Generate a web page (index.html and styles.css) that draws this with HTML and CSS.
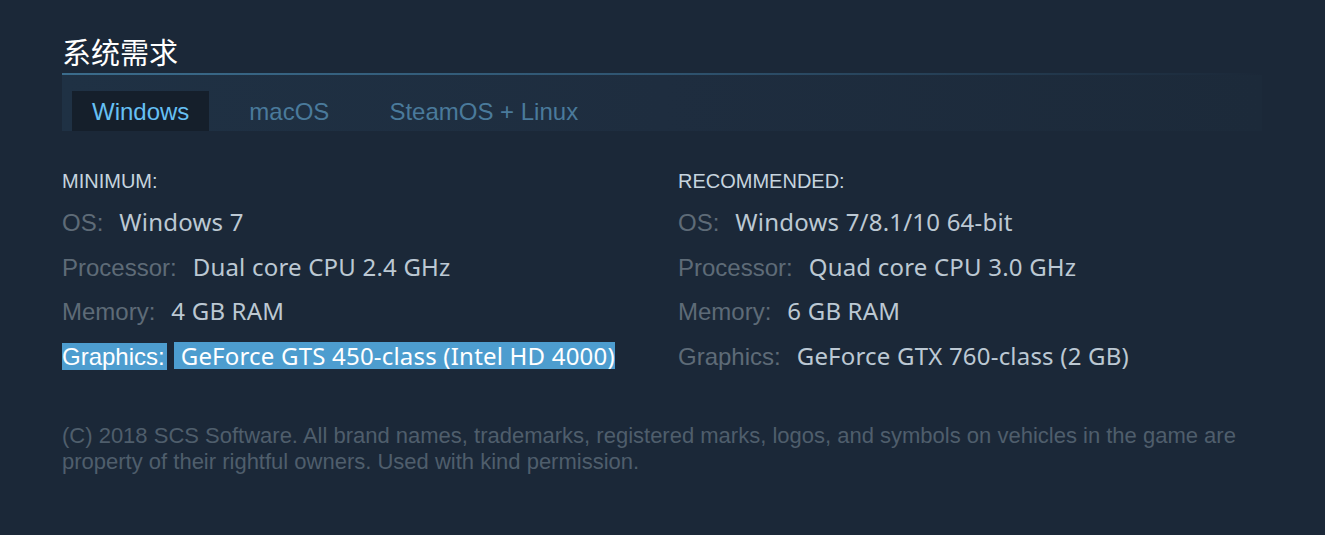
FILE: index.html
```html
<!DOCTYPE html>
<html lang="zh-CN">
<head>
    <meta charset="UTF-8">
    <meta name="viewport" content="width=device-width, initial-scale=1.0">
    <title>系统需求</title>
    <link rel="stylesheet" href="styles.css">
</head>
<body>
    <div class="sysreq">
        <h2>系统需求</h2>
        <div class="rule"></div>
        <div class="tabs">
            <div class="tab active">Windows</div>
            <div class="tab">macOS</div>
            <div class="tab">SteamOS + Linux</div>
        </div>

        <div class="columns">
            <div class="col">
                <div class="col-title">MINIMUM:</div>
                <ul>
                    <li><span class="label">OS:</span><span class="value">Windows 7</span></li>
                    <li><span class="label">Processor:</span><span class="value">Dual core CPU 2.4 GHz</span></li>
                    <li><span class="label">Memory:</span><span class="value">4 GB RAM</span></li>
                    <li><span class="label selected">Graphics:</span><span class="value selected">GeForce GTS 450-class (Intel HD 4000)</span></li>
                </ul>
            </div>
            <div class="col">
                <div class="col-title">RECOMMENDED:</div>
                <ul>
                    <li><span class="label">OS:</span><span class="value">Windows 7/8.1/10 64-bit</span></li>
                    <li><span class="label">Processor:</span><span class="value">Quad core CPU 3.0 GHz</span></li>
                    <li><span class="label">Memory:</span><span class="value">6 GB RAM</span></li>
                    <li><span class="label">Graphics:</span><span class="value">GeForce GTX 760-class (2 GB)</span></li>
                </ul>
            </div>
        </div>

        <p class="legal">(C) 2018 SCS Software. All brand names, trademarks, registered marks, logos, and symbols on vehicles in the game are property of their rightful owners. Used with kind permission.</p>
    </div>
</body>
</html>
```

FILE: styles.css
```css
body {
    margin: 0;
    background: #1b2838;
    font-family: "Liberation Sans", Arial, sans-serif;
}
.sysreq {
    width: 1200px;
    padding: 33px 0 0 62px;
}
h2 {
    margin: 0;
    font-family: "Noto Sans CJK SC", sans-serif;
    font-weight: normal;
    font-size: 29px;
    line-height: 37px;
    color: #ffffff;
}
.rule {
    height: 2px;
    margin-top: 3px;
    background: linear-gradient(to right, #3b6c8c 0%, #2f5470 50%, rgba(47, 84, 112, 0) 100%);
}
.tabs {
    display: flex;
    height: 56px;
    align-items: flex-end;
    padding-left: 10px;
    background: linear-gradient(to right, #1f3144 0%, #1e2d3f 50%, #1c2a3a 100%);
}
.tab {
    height: 40px;
    line-height: 42px;
    padding: 0 20px;
    margin-right: 20px;
    font-size: 24px;
    color: #4a7a9b;
}
.tab.active {
    background: #151f2b;
    color: #66c0f4;
}
.columns {
    display: grid;
    grid-template-columns: 616px 1fr;
    margin-top: 38px;
}
.col-title {
    font-size: 20px;
    line-height: 24px;
    color: #c6d4df;
    margin-bottom: 7px;
}
ul {
    list-style: none;
    margin: 0;
    padding: 0;
}
li {
    box-sizing: border-box;
    display: flex;
    align-items: baseline;
    height: 44.7px;
    padding-top: 8px;
    font-size: 24px;
    line-height: 27px;
}
.label {
    color: #5e6b77;
    margin-right: 7px;
    padding-right: 2px;
}
.value {
    font-family: "Noto Sans", sans-serif;
    font-size: 24px;
    letter-spacing: 0.2px;
    color: #bcc8d3;
    padding-left: 7px;
}
.selected {
    background: #4d9dcf;
    color: #ffffff;
}
.legal {
    margin: 44px 0 0;
    width: 1200px;
    font-size: 22px;
    line-height: 26px;
    color: #4f5e6c;
}
```
